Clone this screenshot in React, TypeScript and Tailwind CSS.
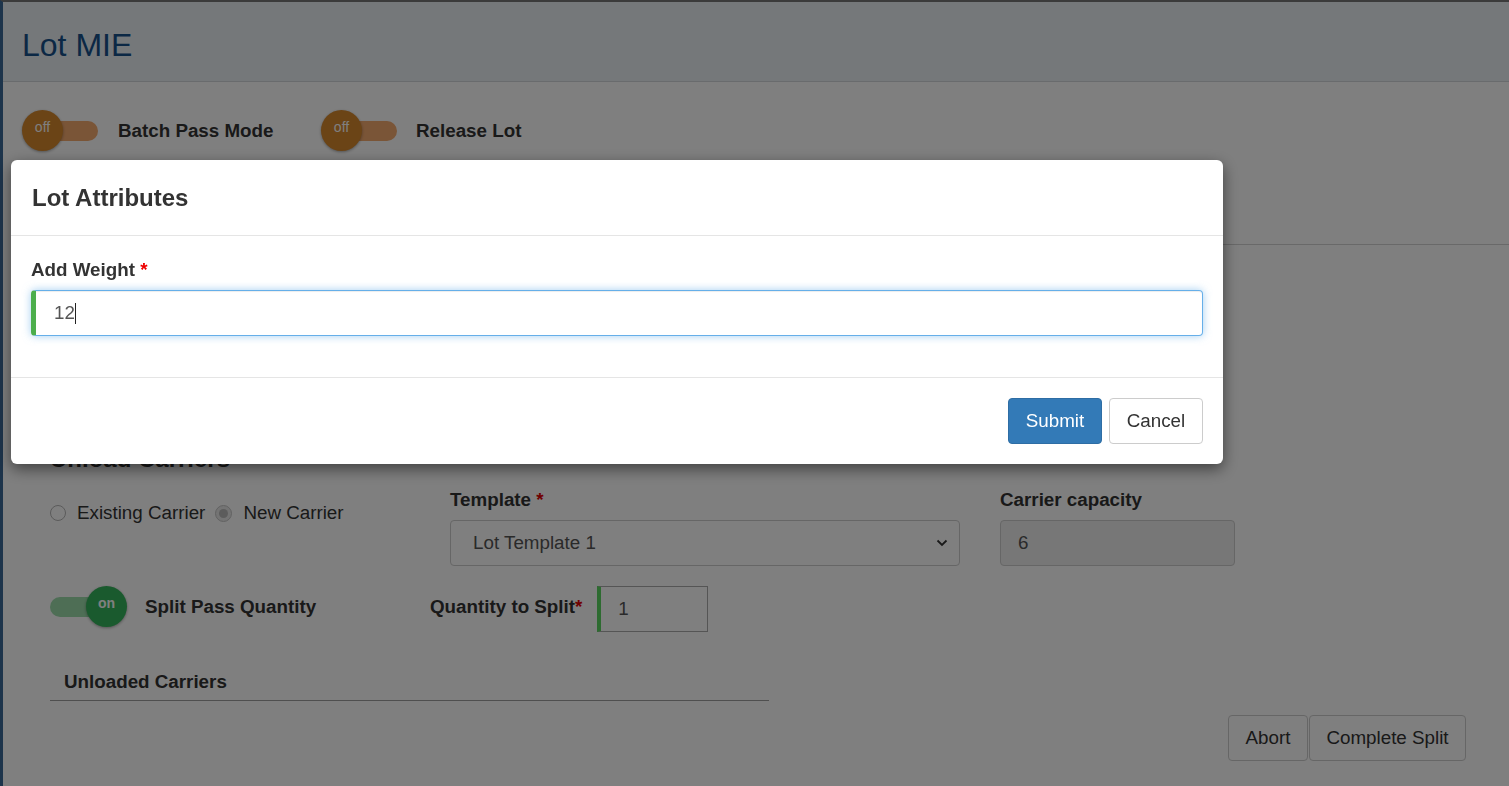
import React from "react";

function Toggle({ on }: { on: boolean }) {
  if (on) {
    return (
      <div className="relative w-[77px] h-[41px] shrink-0">
        <div className="absolute left-0 right-[16px] top-[11px] h-[20px] rounded-full bg-[#9cdcab]" />
        <div className="absolute right-0 top-0 w-[41px] h-[41px] rounded-full bg-[#35b55c] shadow-[0_1px_3px_rgba(0,0,0,0.35)] flex justify-center pt-[9px] text-[14px] font-bold leading-[16px] text-white">
          on
        </div>
      </div>
    );
  }
  return (
    <div className="relative w-[76px] h-[41px] shrink-0">
      <div className="absolute left-[8px] right-0 top-[11px] h-[20px] rounded-full bg-[#f4aa6f]" />
      <div className="absolute left-0 top-0 w-[41px] h-[41px] rounded-full bg-[#d6882c] shadow-[0_1px_3px_rgba(0,0,0,0.35)] flex justify-center pt-[9px] text-[14px] leading-[16px] text-white">
        off
      </div>
    </div>
  );
}

export default function App() {
  return (
    <div className="relative min-h-screen bg-white border-l-[3px] border-l-[#3b6896] border-t-2 border-t-[#777777] font-['Liberation_Sans',Arial,sans-serif] text-[#333]">
      {/* Header */}
      <div className="h-[80px] bg-[#ebf0f5] border-b border-[#d3d7db] pl-[19px] pt-[25px]">
        <h1 className="text-[32px] leading-[37px] text-[#17508a]">Lot MIE</h1>
      </div>

      {/* Toggles row */}
      <div className="pl-[19px] pt-[28px] flex items-center h-[69px]">
        <Toggle on={false} />
        <div className="ml-[20px] w-[203px] text-[18.8px] font-bold leading-[26px]">Batch Pass Mode</div>
        <Toggle on={false} />
        <div className="ml-[19px] text-[18.8px] font-bold leading-[26px]">Release Lot</div>
      </div>

      <div className="mt-[93px] ml-[8px] border-t border-[#d2d2d2]" />

      {/* Lower section */}
      <div className="pl-[47px] pt-[201px]">
        <h3 className="text-[24px] font-bold leading-[26px]">Unload Carriers</h3>

        <div className="mt-[15px] flex items-start">
          <div className="w-[400px] pt-[13px] flex items-center text-[18.8px] leading-[26px] text-[#333]">
            <span className="w-[16px] h-[16px] rounded-full border border-[#b5b5b5] bg-white shrink-0" />
            <span className="ml-[11px]">Existing Carrier</span>
            <span className="ml-[10px] w-[17px] h-[17px] rounded-full border border-[#c4c4c4] bg-[#e8e8e8] shrink-0 flex items-center justify-center">
              <span className="w-[9px] h-[9px] rounded-full bg-[#b8b8b8]" />
            </span>
            <span className="ml-[11px]">New Carrier</span>
          </div>
          <div className="w-[510px]">
            <div className="text-[18.8px] font-bold leading-[26px] mb-[7px]">
              Template <span className="text-[#e00000]">*</span>
            </div>
            <div className="h-[46px] border border-[#cccccc] rounded-[4px] bg-white flex items-center justify-between pl-[22px] pr-[10px] text-[18.8px] text-[#555]">
              <span>Lot Template 1</span>
              <svg width="12" height="8" viewBox="0 0 12 8" className="mr-[1px]">
                <path d="M1.5 1.5 L6 6 L10.5 1.5" fill="none" stroke="#333" strokeWidth="1.8" />
              </svg>
            </div>
          </div>
          <div className="ml-[40px] w-[235px]">
            <div className="text-[18.8px] font-bold leading-[26px] mb-[7px]">Carrier capacity</div>
            <div className="h-[46px] border border-[#cccccc] rounded-[4px] bg-[#eeeeee] flex items-center pl-[17px] text-[18.8px] text-[#555]">
              6
            </div>
          </div>
        </div>

        <div className="mt-[20px] flex items-start">
          <div className="w-[380px] h-[41px] flex items-center">
            <Toggle on={true} />
            <div className="ml-[18px] text-[18.8px] font-bold leading-[26px]">Split Pass Quantity</div>
          </div>
          <div className="h-[46px] flex items-center pb-[4px] text-[18.8px] font-bold leading-[26px]">
            Quantity to Split<span className="text-[#e00000]">*</span>
          </div>
          <div className="ml-[15px] w-[111px] h-[46px] border border-[#aaaaaa] border-l-[4px] border-l-[#5ad660] bg-white flex items-center pl-[17px] text-[18.8px] text-[#555]">
            1
          </div>
        </div>

        <div className="mt-[37px] w-[719px] pl-[14px] pb-[5px] border-b border-[#9e9e9e] text-[18.8px] font-bold leading-[26px]">
          Unloaded Carriers
        </div>

        <div className="mt-[14px] flex justify-end pr-[43px] gap-[1px]">
          <button className="h-[46px] w-[80px] border border-[#cccccc] rounded-[4px] bg-white text-[18.8px] text-[#333]">
            Abort
          </button>
          <button className="h-[46px] w-[157px] border border-[#cccccc] rounded-[4px] bg-white text-[18.8px] text-[#333]">
            Complete Split
          </button>
        </div>
      </div>

      {/* Backdrop */}
      <div className="fixed inset-0 bg-black/50" />

      {/* Modal */}
      <div className="fixed left-[11px] top-[160px] w-[1212px] rounded-[6px] bg-white shadow-[0_5px_15px_rgba(0,0,0,0.5)]">
        <div className="h-[76px] px-[21px] flex items-center border-b border-[#e5e5e5]">
          <h4 className="text-[24px] font-bold leading-[26px] text-[#333]">Lot Attributes</h4>
        </div>
        <div className="px-[20px] pt-[21px] pb-[41px]">
          <div className="text-[18.8px] font-bold leading-[26px] mb-[7px] text-[#333]">
            Add Weight <span className="text-[#ee0000]">*</span>
          </div>
          <div className="h-[46px] border border-[#66afe9] border-l-[5px] border-l-[#4cae4c] rounded-[4px] shadow-[inset_0_1px_1px_rgba(0,0,0,0.075),0_0_8px_rgba(102,175,233,0.6)] pl-[18px] flex items-center text-[18.8px] text-[#555]">
            <span>12</span>
            <span className="w-px h-[21px] bg-[#222]" />
          </div>
        </div>
        <div className="border-t border-[#e5e5e5] pt-[20px] pb-[20px] pr-[20px] flex justify-end gap-[7px]">
          <button className="h-[46px] w-[94px] bg-[#337ab7] border border-[#2e6da4] rounded-[4px] text-white text-[18.8px]">
            Submit
          </button>
          <button className="h-[46px] w-[94px] bg-white border border-[#cccccc] rounded-[4px] text-[#333] text-[18.8px]">
            Cancel
          </button>
        </div>
      </div>
    </div>
  );
}
